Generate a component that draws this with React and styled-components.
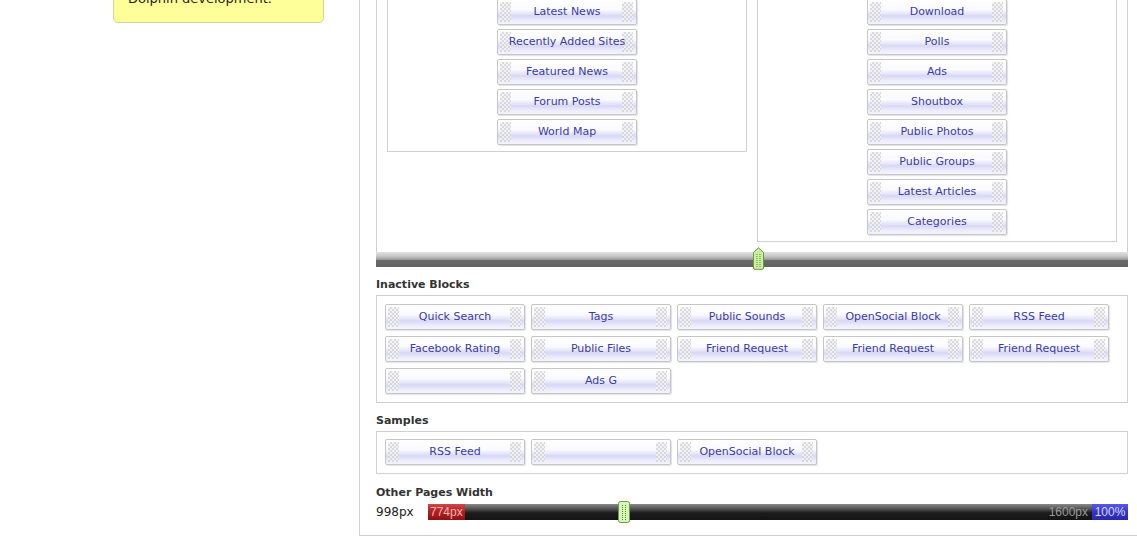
import React from 'react';
import styled, { createGlobalStyle } from 'styled-components';

const GlobalStyle = createGlobalStyle`
  html, body {
    margin: 0;
    padding: 0;
    background: #fff;
    overflow: hidden;
  }
  body {
    font-family: 'DejaVu Sans', Verdana, sans-serif;
  }
`;

const Page = styled.div`
  display: flex;
  align-items: flex-start;
  width: 1139px;
  margin-top: -19px;
`;

const Sidebar = styled.aside`
  width: 359px;
  flex: none;
`;

const Note = styled.div`
  margin-left: 113px;
  width: 181px;
  padding: 9px 14px 15px;
  background: #ffff99;
  border: 1px solid #d6d39a;
  border-radius: 5px;
  font-size: 13px;
  line-height: 16px;
  color: #222;
`;

const Main = styled.main`
  flex: 1;
  border-left: 1px solid #cfcfcf;
  border-right: 1px solid #cfcfcf;
  border-bottom: 1px solid #cfcfcf;
  padding: 0 10px 15px 16px;
`;

const ColumnsFrame = styled.div`
  display: flex;
  align-items: flex-start;
  gap: 10px;
  padding: 10px;
  border: 1px solid #cfcfcf;
  border-bottom: none;
`;

const Column = styled.div`
  width: 358px;
  border: 1px solid #cfcfcf;
  padding: 6px 0;
  display: flex;
  flex-direction: column;
  align-items: center;
  gap: 4px;
`;

const GreyBar = styled.div`
  position: relative;
  height: 15px;
  background: linear-gradient(
    #e2e2e2 0%,
    #c4c4c4 30%,
    #9a9a9a 50%,
    #6a6a6a 52%,
    #646464 100%
  );
`;

const Handle = styled.svg`
  position: absolute;
  left: ${(p) => p.left}px;
  top: ${(p) => p.top}px;
`;

const Heading = styled.h3`
  margin: ${(p) => p.top || 10}px 0 2px;
  font-size: 11px;
  line-height: 16px;
  font-weight: bold;
  color: #333;
`;

const BlockBox = styled.div`
  display: grid;
  grid-template-columns: repeat(5, 140px);
  gap: 6px;
  border: 1px solid #cfcfcf;
  padding: ${(p) => p.pad};
`;

const Block = styled.div`
  position: relative;
  box-sizing: border-box;
  width: 140px;
  height: 26px;
  padding-bottom: 2px;
  border: 1px solid #c6c6c6;
  border-radius: 2px;
  box-shadow: 1px 1px 1px rgba(0, 0, 0, 0.12);
  background: linear-gradient(
    #ffffff 0%,
    #fafaff 40%,
    #e4e4fb 58%,
    #d8d8f6 66%,
    #ececfc 85%,
    #f4f4ff 100%
  );
  display: flex;
  align-items: center;
  justify-content: center;
  font-size: 11px;
  color: #3a3aa8;
  white-space: nowrap;

  &::before,
  &::after {
    content: '';
    position: absolute;
    top: 2px;
    bottom: 2px;
    width: 11px;
    background: repeating-conic-gradient(#d4d4d8 0 25%, #f2f2f4 0 50%) 0 0 / 4px 4px;
    opacity: 0.85;
  }
  &::before {
    left: 2px;
  }
  &::after {
    right: 3px;
  }
`;

const Label = styled.span`
  position: relative;
  z-index: 1;
`;

const WidthRow = styled.div`
  display: flex;
  align-items: center;
  margin-top: 3px;
`;

const WidthValue = styled.span`
  width: 52px;
  font-size: 12px;
  color: #222;
`;

const BlackBar = styled.div`
  position: relative;
  flex: 1;
  height: 16px;
  display: flex;
  align-items: stretch;
  font-family: 'Liberation Sans', Arial, sans-serif;
  font-size: 12px;
  line-height: 16px;
  background: linear-gradient(
    #8a8a8a 0%,
    #4a4a4a 35%,
    #1c1c1c 55%,
    #141414 100%
  );
`;

const MinLabel = styled.span`
  width: 35px;
  padding-left: 2px;
  color: #ffb4b4;
  background: linear-gradient(#d04848 0%, #b02222 45%, #8e1212 100%);
`;

const MaxText = styled.span`
  margin-left: auto;
  padding-right: 4px;
  color: #9a9a9a;
`;

const MaxLabel = styled.span`
  width: 36px;
  text-align: center;
  color: #d8d8ff;
  background: linear-gradient(#5a5ae8 0%, #3434c8 50%, #2828a8 100%);
`;

const DotGrid = ({ x, y, rows }) =>
  Array.from({ length: rows }).flatMap((_, r) => [
    <rect key={`a${r}`} x={x} y={y + r * 2} width="1" height="1" fill="#5d8a3a" />,
    <rect key={`b${r}`} x={x + 3} y={y + r * 2} width="1" height="1" fill="#5d8a3a" />,
  ]);

const ArrowHandle = () => (
  <Handle left={376} top={-5} width="13" height="23" viewBox="0 0 13 23">
    <path
      d="M1.5 5.5 L6.5 0.8 L11.5 5.5 L11.5 21 Q11.5 22.3 10 22.3 L3 22.3 Q1.5 22.3 1.5 21 Z"
      fill="#c9ef9f"
      stroke="#6a9c3e"
    />
    <DotGrid x={4.5} y={7} rows={7} />
  </Handle>
);

const KnobHandle = () => (
  <Handle left={190} top={-3} width="12" height="22" viewBox="0 0 12 22">
    <rect x="0.5" y="0.5" width="11" height="21" rx="2" fill="#d6f5b8" stroke="#6a9c3e" />
    <DotGrid x={4} y={4} rows={8} />
  </Handle>
);

const leftBlocks = ['Latest News', 'Recently Added Sites', 'Featured News', 'Forum Posts', 'World Map'];
const rightBlocks = [
  'Download',
  'Polls',
  'Ads',
  'Shoutbox',
  'Public Photos',
  'Public Groups',
  'Latest Articles',
  'Categories',
];
const inactive = [
  'Quick Search',
  'Tags',
  'Public Sounds',
  'OpenSocial Block',
  'RSS Feed',
  'Facebook Rating',
  'Public Files',
  'Friend Request',
  'Friend Request',
  'Friend Request',
  '',
  'Ads G',
];
const samples = ['RSS Feed', '', 'OpenSocial Block'];

const BlockItem = ({ title }) => (
  <Block>
    <Label>{title}</Label>
  </Block>
);

export default function App() {
  return (
    <>
      <GlobalStyle />
      <Page>
        <Sidebar>
          <Note>Dolphin development.</Note>
        </Sidebar>
        <Main>
          <ColumnsFrame>
            <Column>
              {leftBlocks.map((b) => (
                <BlockItem key={b} title={b} />
              ))}
            </Column>
            <Column>
              {rightBlocks.map((b) => (
                <BlockItem key={b} title={b} />
              ))}
            </Column>
          </ColumnsFrame>
          <GreyBar>
            <ArrowHandle />
          </GreyBar>

          <Heading>Inactive Blocks</Heading>
          <BlockBox pad="8px 8px 8px">
            {inactive.map((b, i) => (
              <BlockItem key={i} title={b} />
            ))}
          </BlockBox>

          <Heading>Samples</Heading>
          <BlockBox pad="7px 8px 8px">
            {samples.map((b, i) => (
              <BlockItem key={i} title={b} />
            ))}
          </BlockBox>

          <Heading top={11}>Other Pages Width</Heading>
          <WidthRow>
            <WidthValue>998px</WidthValue>
            <BlackBar>
              <MinLabel>774px</MinLabel>
              <MaxText>1600px</MaxText>
              <MaxLabel>100%</MaxLabel>
              <KnobHandle />
            </BlackBar>
          </WidthRow>
        </Main>
      </Page>
    </>
  );
}
